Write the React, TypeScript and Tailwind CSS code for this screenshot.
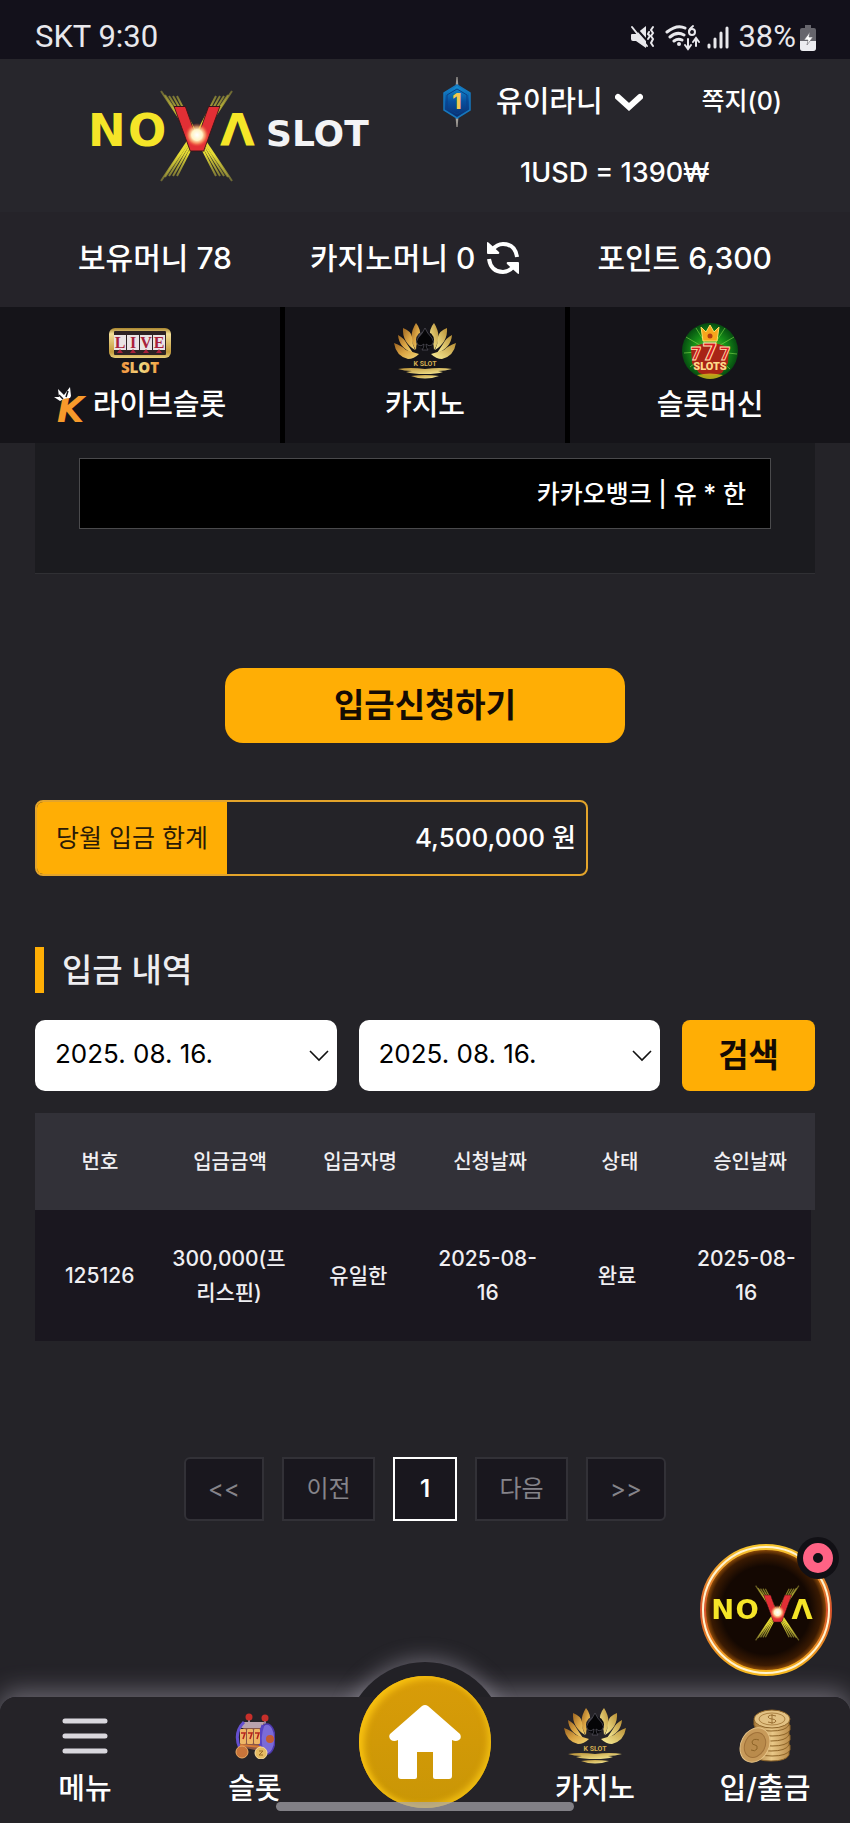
import type { ReactNode } from 'react';

const LOGO_FONT = "'DejaVu Sans', sans-serif";

const tabs = [
  { name: '라이브슬롯', link: '#live', icon: <LiveSlotIcon />, prefix: <KMark /> },
  { name: '카지노', link: '#casino', icon: <KSlotIcon id="tab" /> },
  { name: '슬롯머신', link: '#slot', icon: <SevensIcon /> },
];

const columns = ['번호', '입금금액', '입금자명', '신청날짜', '상태', '승인날짜'];

const deposits = [['125126', '300,000(프리스핀)', '유일한', '2025-08-16', '완료', '2025-08-16']];

const pages = [
  { name: '<<', style: 'w-20 rounded-l-md border-[#323137] text-[#85848a]' },
  { name: '이전', style: 'w-[93px] border-[#323137] text-[#85848a]' },
  { name: '1', style: 'w-16 border-white font-semibold text-white' },
  { name: '다음', style: 'w-[93px] border-[#323137] text-[#85848a]' },
  { name: '>>', style: 'w-20 rounded-r-md border-[#323137] text-[#85848a]' },
];

/* Letters and light burst shared by the header logo and the floating button */
function NovaLetters({ id }: { id: string }) {
  const rays = [0, 4, 8, 12, 16];
  return (
    <>
      <defs>
        <radialGradient id={`${id}-core`}>
          <stop offset="0" stopColor="#fff" />
          <stop offset="0.45" stopColor="#fff3c4" />
          <stop offset="0.7" stopColor="#ffb070" stopOpacity="0.7" />
          <stop offset="1" stopColor="#f04030" stopOpacity="0" />
        </radialGradient>
        <linearGradient id={`${id}-ray`} gradientUnits="userSpaceOnUse" x1="0" y1="0" x2="0" y2="92">
          <stop offset="0" stopColor="#a9a23c" stopOpacity="0.5" />
          <stop offset="0.35" stopColor="#e6dc34" />
          <stop offset="0.7" stopColor="#e6dc34" />
          <stop offset="1" stopColor="#a9a23c" stopOpacity="0.5" />
        </linearGradient>
      </defs>
      <g stroke={`url(#${id}-ray)`} strokeWidth="2">
        {rays.map((r) => (
          <g key={r}>
            <path d={`M${70 + r} ${1 + Math.min(r, 5)} L${103 + r / 3} 50`} />
            <path d={`M${141 - r} ${1 + Math.min(r, 5)} L${108 - r / 3} 50`} />
            <path d={`M${70 + r} ${91 - Math.min(r, 5)} L${103 + r / 3} 42`} />
            <path d={`M${141 - r} ${91 - Math.min(r, 5)} L${108 - r / 3} 42`} />
          </g>
        ))}
      </g>
      <g fontFamily={LOGO_FONT} fontWeight="700">
        <text x="-3" y="56" fontSize="45" fill="#f5e528">N</text>
        <text x="37" y="56" fontSize="45" fill="#f5e528">O</text>
        <text x="129" y="56" fontSize="45" fill="#f5e528">Λ</text>
        <text x="106" y="61" fontSize="60" fill="#e22f35" stroke="#3a1518" strokeWidth="0.8" textAnchor="middle">
          V
        </text>
      </g>
      <circle cx="106" cy="45" r="12" fill={`url(#${id}-core)`} />
    </>
  );
}

function Logo() {
  return (
    <svg className="h-[92px] w-[285px] overflow-visible" viewBox="0 0 285 92" role="img" aria-label="NOVA SLOT">
      <NovaLetters id="logo" />
      <text x="175" y="56" fontSize="36" fontWeight="700" fill="#f3f3f5" fontFamily={LOGO_FONT}>
        SLOT
      </text>
    </svg>
  );
}

function StatusIcons() {
  return (
    <svg className="h-7 w-[100px]" viewBox="0 0 100 28" fill="none" stroke="#e8e8ec" strokeLinecap="round">
      {/* muted, vibrating */}
      <path d="M1 11q0-1 1-1h4l10-8v22l-10-7H3q-2 0-2-2z" fill="#e8e8ec" stroke="none" />
      <path d="M4 2l16 18" stroke="#13111b" strokeWidth="2" />
      <path d="M2 3l15 19" strokeWidth="2" />
      <path d="M19 8l-1 2 2 2-2 3M23 3l-2 3 2 3-2 3 2 3-2 4 2 3" strokeWidth="2" />
      {/* wifi 6 */}
      <path d="M37 8q10-8 18-4M40 13q7-6 14-2M44 17q4-3 8-1" strokeWidth="3" />
      <circle cx="49" cy="20" r="2" fill="#e8e8ec" stroke="none" />
      <path d="M63 2q-4 3-4 6" strokeWidth="2" />
      <circle cx="62" cy="8" r="3" strokeWidth="2" />
      <path d="M58 15v9m-3-3l3 4 3-4M66 22v-7m-3 3l3-4 3 4" strokeWidth="2" />
      {/* signal */}
      <path d="M79 21v2M85 15v8M91 9v14M97 4v19" strokeWidth="3" />
    </svg>
  );
}

function BatteryIcon() {
  return (
    <svg className="h-[26px] w-4" viewBox="0 0 16 26">
      <path d="M5 0h6v3h3q2 0 2 2v18q0 3-3 3H3q-3 0-3-3V5q0-2 2-2h3z" fill="#66656c" />
      <path d="M0 16h16v7q0 3-3 3H3q-3 0-3-3z" fill="#ececf0" />
      <path d="M10 7L4 15h4l-1 5 6-8H9z" fill="#fff" stroke="#66656c" strokeWidth="0.6" />
    </svg>
  );
}

function LevelBadge() {
  return (
    <svg className="h-[50px] w-[30px]" viewBox="0 0 30 50" role="img" aria-label="레벨 1">
      <defs>
        <linearGradient id="level" x2="0" y2="1">
          <stop offset="0" stopColor="#1593d6" />
          <stop offset="0.5" stopColor="#07509f" />
          <stop offset="1" stopColor="#0a2c6c" />
        </linearGradient>
      </defs>
      <path d="M15 0l1 9h-2zM15 50l1-9h-2z" fill="#b9b3ac" stroke="#b9b3ac" strokeWidth="0.6" />
      <path d="M15 8l13 8v17l-13 8-13-8V16z" fill="url(#level)" stroke="#1677bd" strokeWidth="1.5" />
      <path d="M15 12l10 6v13l-10 6-10-6V18z" fill="none" stroke="#0a3f86" />
      <text x="15" y="32" fontSize="21" fontWeight="800" fill="#f3c74f" textAnchor="middle" fontFamily="Inter, sans-serif">
        1
      </text>
    </svg>
  );
}

function RefreshIcon() {
  return (
    <svg className="block size-8" viewBox="0 0 32 32" fill="none" stroke="#fff" strokeWidth="4">
      <path d="M5 8Q10 2 16 2q12 0 14 13" />
      <path d="M0 1q0-2 2 0l10 9q1 2-1 2H1q-1 0-1-1z" fill="#fff" stroke="none" />
      <path d="M27 24q-5 6-11 6Q4 30 2 17" />
      <path d="M32 31q0 2-2 0l-10-9q-1-2 1-2h10q1 0 1 1z" fill="#fff" stroke="none" />
    </svg>
  );
}

function LiveSlotIcon() {
  return (
    <svg className="h-[46px] w-16 overflow-visible" viewBox="0 0 64 46">
      <defs>
        <linearGradient id="live-frame" x2="0" y2="1">
          <stop offset="0" stopColor="#a8842c" />
          <stop offset="0.2" stopColor="#f3df98" />
          <stop offset="0.8" stopColor="#c39b3c" />
          <stop offset="1" stopColor="#e8cf7c" />
        </linearGradient>
        <linearGradient id="live-text">
          <stop offset="0" stopColor="#f28b35" />
          <stop offset="0.5" stopColor="#f0dc84" />
          <stop offset="1" stopColor="#f29a3c" />
        </linearGradient>
      </defs>
      <rect x="1" y="0" width="62" height="30" rx="6" fill="url(#live-frame)" />
      <rect x="6" y="3" width="52" height="24" rx="1" fill="#2d2224" />
      {['L', 'I', 'V', 'E'].map((letter, i) => (
        <g key={letter}>
          <rect x={6 + i * 13} y="7" width="12" height="15" fill="#e9e3e4" />
          <path d={`M${12 + i * 13} 21l3 4h-6z`} fill="#a8203a" />
          <text
            x={12 + i * 13}
            y="20"
            fontSize="16"
            fontWeight="700"
            fill="#a8203a"
            textAnchor="middle"
            fontFamily="'Liberation Serif', serif"
          >
            {letter}
          </text>
        </g>
      ))}
      <text x="32" y="45" fontSize="15" fontWeight="800" fill="url(#live-text)" textAnchor="middle" fontFamily="'Open Sans', sans-serif">
        SLOT
      </text>
    </svg>
  );
}

function KMark() {
  return (
    <svg className="h-9 w-[35px] overflow-visible" viewBox="0 0 35 36">
      <text x="3" y="35" fontSize="35" fontWeight="700" fontStyle="italic" fill="#f79a2b" fontFamily={LOGO_FONT}>
        K
      </text>
      <path d="M6 14L0 10l5 0-1-8 6 6 6-8 1 9-1 2q-6 0-10 3z" fill="#fff" />
      <path d="M5 8l4 4M14 4l-2 6" stroke="#151419" strokeWidth="1.5" />
    </svg>
  );
}

function KSlotIcon({ id }: { id: string }) {
  const petals = (
    <>
      <path d="M22 0q5 6 4 14-4 5-4 13-9-13 0-27z" />
      <path d="M9 5q8 3 9 9 0 7 3 13-13-8-12-22z" />
      <path d="M4 12q6 3 9 9l6 9Q5 25 4 12z" />
      <path d="M0 20q8 3 12 7l13 4q-5 5-11 5Q2 33 0 20z" />
    </>
  );
  return (
    <svg className="h-14 w-[62px]" viewBox="0 0 62 56">
      <defs>
        <linearGradient id={`${id}-left`} x2="1" y2="1">
          <stop offset="0" stopColor="#9c6420" />
          <stop offset="0.5" stopColor="#dba544" />
          <stop offset="1" stopColor="#f2d878" />
        </linearGradient>
        <linearGradient id={`${id}-right`} x2="1" y2="1">
          <stop offset="0" stopColor="#b98f34" />
          <stop offset="1" stopColor="#fbf19c" />
        </linearGradient>
        <radialGradient id={`${id}-spade`} cx="0.35" cy="0.3">
          <stop offset="0" stopColor="#777681" />
          <stop offset="0.5" stopColor="#26252b" />
          <stop offset="1" stopColor="#08080b" />
        </radialGradient>
      </defs>
      <g fill={`url(#${id}-left)`}>{petals}</g>
      <g fill={`url(#${id}-right)`} transform="matrix(-1 0 0 1 62 0)">{petals}</g>
      <circle cx="31" cy="17" r="9" fill={`url(#${id}-spade)`} />
      <path
        d="M31 5q2 5 7 10 3 4 0 7-3 2-6-1 0 4 2 6h-6q2-2 2-6-3 3-6 1-3-3 0-7 5-5 7-10z"
        fill="#050507"
        stroke="#56555e"
        strokeWidth="0.7"
      />
      <text x="31" y="43" fontSize="7" fontWeight="700" fill="#d3ad52" textAnchor="middle" fontFamily="Roboto, sans-serif">
        K SLOT
      </text>
      <path d="M4 46q12-2 27 0 15-2 27 0-7 2-14 2l5 1q-6 2-18 2t-19-2l6-1q-8 0-14-2z" fill={`url(#${id}-right)`} />
      <path d="M17 53q14-2 28 0-14 5-28 0z" fill={`url(#${id}-right)`} />
    </svg>
  );
}

function SevensIcon() {
  return (
    <svg className="h-[57px] w-[57px]" viewBox="0 0 57 57">
      <defs>
        <radialGradient id="sevens">
          <stop offset="0" stopColor="#7fd030" />
          <stop offset="0.6" stopColor="#159018" />
          <stop offset="1" stopColor="#064c10" />
        </radialGradient>
      </defs>
      <circle cx="28" cy="28" r="28" fill="url(#sevens)" />
      <path
        d="M28 28L4 14M28 28L2 30M28 28L8 44M28 28l24-14M28 28l27 3M28 28l20 18M28 28L14 5M28 28L43 5"
        stroke="#86dd4c"
        opacity="0.6"
      />
      <path d="M19 4l5 5 4-7 4 7 5-5-2 14H21z" fill="#f7a61c" stroke="#ffdb62" />
      <circle cx="28" cy="13" r="2.5" fill="#b43b10" />
      <path d="M9 25q10-5 19-5t19 5l-1 15-6 10q-12 5-23 0l-7-10z" fill="#a82416" />
      <g fontWeight="900" textAnchor="middle" fontFamily="Roboto, sans-serif">
        <g fill="#d81920" stroke="#ffe2b0">
          <text x="14" y="37" fontSize="18" strokeWidth="0.8">7</text>
          <text x="43" y="37" fontSize="18" strokeWidth="0.8">7</text>
          <text x="28" y="37" fontSize="24" strokeWidth="1">7</text>
        </g>
        <text x="28" y="47" fontSize="11" fill="#ffd98a">SLOTS</text>
      </g>
      <path d="M15 52q13-3 26 0-13 8-26 0z" fill="#d7b71c" opacity="0.8" />
    </svg>
  );
}

function MenuIcon() {
  return (
    <svg className="h-9 w-[46px]" viewBox="0 0 46 36" stroke="#d9d7dd" strokeWidth="5" strokeLinecap="round">
      <path d="M3 3h40M3 18h40M3 33h40" />
    </svg>
  );
}

function SlotMachineIcon() {
  return (
    <svg className="h-[46px] w-10" viewBox="0 0 40 46">
      <path d="M14 4v10M30 5v10" stroke="#b8a5c4" strokeWidth="1.5" />
      <circle cx="14" cy="4" r="3.5" fill="#c72f2a" />
      <circle cx="30" cy="5" r="3.5" fill="#c72f2a" />
      <path d="M9 9h20v30L6 34z" fill="#8b5747" />
      <path d="M8 9h21l-2 6H6z" fill="#b9a2ad" />
      <ellipse cx="32" cy="26" rx="8" ry="15" fill="#7b6bd8" stroke="#4c37ab" strokeWidth="1.5" />
      <path d="M9 9Q-2 20 5 36" fill="none" stroke="#6550d0" strokeWidth="3" />
      <path d="M28 12q-5 12-1 27" fill="none" stroke="#5643c4" strokeWidth="3" />
      {[5, 12, 19].map((x) => (
        <g key={x}>
          <rect x={x} y="16" width="6" height="15" rx="1" fill="#eeb565" />
          <path d={`M${x + 1} 20h4l-2 6`} fill="none" stroke="#b8261e" strokeWidth="1.6" />
        </g>
      ))}
      <path d="M5 32l21 2" stroke="#d87b37" strokeWidth="2" />
      <circle cx="35" cy="26" r="4" fill="#c35a33" />
      <circle cx="7" cy="39" r="6" fill="#c8743a" stroke="#edaa62" />
      <circle cx="26" cy="40" r="6" fill="#e5bb62" stroke="#f8dda0" />
      <path d="M24 38h4l-4 4h4" fill="none" stroke="#9b6a25" />
    </svg>
  );
}

function CoinsIcon() {
  return (
    <svg className="h-[54px] w-[52px]" viewBox="0 0 52 54" stroke="#8d6428">
      <defs>
        <linearGradient id="coin">
          <stop offset="0" stopColor="#a97a3a" />
          <stop offset="0.5" stopColor="#e9c888" />
          <stop offset="1" stopColor="#b98a48" />
        </linearGradient>
      </defs>
      {[44, 39, 34, 29, 24, 19, 14].map((y, i) => (
        <path key={y} d={`M${15 + (i % 2)} ${y - 3}v5q2 6 17 6t18-6v-5z`} fill="url(#coin)" />
      ))}
      <ellipse cx="33" cy="10" rx="18" ry="9" fill="#e2c183" />
      <ellipse cx="33" cy="10" rx="13" ry="6" fill="none" stroke="#ad8344" />
      <path d="M37 7q-7-2-8 1 1 2 4 2t4 2q-1 3-8 1M33 5v10" fill="none" stroke="#9a7034" />
      <ellipse cx="16" cy="36" rx="14" ry="18" transform="rotate(28 16 36)" fill="#c79a5a" stroke="#e6c488" />
      <ellipse cx="16" cy="36" rx="10" ry="13" transform="rotate(28 16 36)" fill="#b98b4c" stroke="#a0723a" />
      <path d="M20 31q-6-2-7 2 0 3 3 3t2 4q-2 3-6 1" fill="none" stroke="#8d6428" />
    </svg>
  );
}

function NavItem({ name, link, children }: { name: string; link: string; children: ReactNode }) {
  return (
    <a href={link} className="flex flex-col items-center pt-3 text-[29px] leading-9 font-medium">
      <span className="flex h-[54px] items-center">{children}</span>
      <span className="mt-2">{name}</span>
    </a>
  );
}

function DateSelect({ label }: { label: string }) {
  return (
    <label className="relative flex-1">
      <span className="sr-only">{label}</span>
      <select className="h-[71px] w-full appearance-none rounded-[10px] bg-white px-5 pb-1 text-[26px] text-black">
        <option>2025. 08. 16.</option>
      </select>
      <svg
        className="pointer-events-none absolute top-[30px] right-2 h-3 w-5"
        viewBox="0 0 20 12"
        fill="none"
        stroke="#111"
        strokeWidth="1.6"
      >
        <path d="M1 1l9 9 9-9" />
      </svg>
    </label>
  );
}

const App = () => {
  return (
    <div className="flex min-h-screen flex-col bg-[#242328] font-[Inter,'Noto_Sans_CJK_KR',sans-serif] text-white">
      <div className="flex h-[59px] items-center justify-between bg-[#13111b] pt-4 pr-[34px] pl-[35px] font-[Roboto,sans-serif] text-[31px] text-[#e8e8ec]">
        <span>SKT 9:30</span>
        <div className="flex items-center">
          <StatusIcons />
          <span className="mr-1 ml-2">38%</span>
          <BatteryIcon />
        </div>
      </div>

      <header className="font-medium">
        <div className="flex h-[153px] items-center bg-[#27262c] pl-[91px]">
          <a href="#home">
            <Logo />
          </a>
          <div className="flex flex-1 flex-col gap-7 pb-1 pl-[66px]">
            <div className="flex items-center">
              <LevelBadge />
              <button type="button" className="ml-6 flex items-center gap-3 text-[29px]">
                유이라니
                <svg className="h-[18px] w-7" viewBox="0 0 28 18" fill="none" stroke="#fff" strokeWidth="6" strokeLinecap="round">
                  <path d="M3 4l11 10L25 4" />
                </svg>
              </button>
              <a href="#message" className="ml-auto pr-[68px] text-[25px]">
                쪽지(0)
              </a>
            </div>
            <p className="pl-[78px] text-[27px] leading-9">1USD = 1390₩</p>
          </div>
        </div>

        <div className="flex h-[95px] items-center justify-between bg-[#252329] px-[78px] pb-1 text-3xl">
          <span>보유머니 78</span>
          <span className="flex items-center gap-3">
            카지노머니 0
            <button type="button" aria-label="새로고침">
              <RefreshIcon />
            </button>
          </span>
          <span>포인트 6,300</span>
        </div>

        <nav className="grid grid-cols-3 gap-[5px] bg-black">
          {tabs.map((tab) => (
            <a
              key={tab.link}
              href={tab.link}
              className="flex h-[136px] flex-col items-center bg-[#151419] pt-[15px] text-[29px] leading-[42px]"
            >
              <span className="flex h-[58px] items-center">{tab.icon}</span>
              <span className="mt-1 flex items-center gap-1">
                {tab.prefix}
                {tab.name}
              </span>
            </a>
          ))}
        </nav>
      </header>

      <main className="flex-1 px-[35px] pb-[176px]">
        <section className="border-b border-[#303034] bg-[#1b1b1f] px-11 pt-[15px] pb-11">
          <input
            readOnly
            aria-label="입금 계좌"
            value="카카오뱅크 | 유 * 한"
            className="block h-[71px] w-full border border-[#4a4a4c] bg-black px-6 pb-1 text-right text-[25px] font-medium"
          />
        </section>

        <button
          type="button"
          className="mx-auto mt-[94px] block h-[75px] w-[400px] rounded-[18px] bg-[#ffae05] text-[33px] font-bold text-[#140b04]"
        >
          입금신청하기
        </button>

        <dl className="mt-[57px] flex h-[76px] w-[553px] items-stretch overflow-hidden rounded-lg border-2 border-[#e3a42b] text-[25px] leading-[72px]">
          <dt className="w-[190px] bg-[#ffae05] text-center text-[#2a1a06]">당월 입금 합계</dt>
          <dd className="flex-1 pr-[10px] text-right text-[26px] font-medium">4,500,000 원</dd>
        </dl>

        <h2 className="mt-[71px] border-l-[9px] border-[#ffae05] pl-[18px] text-[33px] leading-[46px] font-medium text-[#ededf0]">
          입금 내역
        </h2>

        <form className="mt-[27px] flex gap-[22px]">
          <DateSelect label="시작일" />
          <DateSelect label="종료일" />
          <button type="button" className="h-[71px] w-[133px] rounded-lg bg-[#ffae05] text-[33px] font-bold text-[#140b04]">
            검색
          </button>
        </form>

        <table className="mt-[22px] block text-xl font-medium text-[#f0eff2]">
          <thead className="block bg-[#323138]">
            <tr className="grid h-[97px] grid-cols-6 items-center">
              {columns.map((column) => (
                <th key={column} className="font-medium">
                  {column}
                </th>
              ))}
            </tr>
          </thead>
          <tbody className="mr-1 block bg-[#1a171f]">
            {deposits.map((row) => (
              <tr key={row[0]} className="grid h-[131px] grid-cols-6 items-center text-center text-[21px] leading-[34px]">
                {row.map((cell, i) => (
                  <td key={i} className="px-1.5">
                    {cell}
                  </td>
                ))}
              </tr>
            ))}
          </tbody>
        </table>

        <nav className="mt-[116px] flex justify-center gap-[18px]" aria-label="페이지">
          {pages.map((page) => (
            <button key={page.name} type="button" className={`h-16 border-2 bg-[#19171e] text-2xl ${page.style}`}>
              {page.name}
            </button>
          ))}
        </nav>
      </main>

      <button type="button" aria-label="NOVA" className="fixed right-[18px] bottom-[147px] z-20 size-[132px]">
        <svg viewBox="0 0 132 132" className="size-full overflow-visible">
          <defs>
            <radialGradient id="ring-inner">
              <stop offset="0.7" stopColor="#140802" />
              <stop offset="0.88" stopColor="#3a1a02" />
              <stop offset="1" stopColor="#b8650c" />
            </radialGradient>
            <linearGradient id="ring" x2="0" y2="1">
              <stop offset="0" stopColor="#f7c52d" />
              <stop offset="0.5" stopColor="#d8522c" />
              <stop offset="1" stopColor="#f7b81f" />
            </linearGradient>
          </defs>
          <circle cx="66" cy="66" r="63" fill="url(#ring-inner)" stroke="url(#ring)" strokeWidth="6" />
          <circle cx="66" cy="66" r="63" fill="none" stroke="#fff3cf" strokeWidth="2" />
          <svg x="13" y="41" width="106" height="56" viewBox="0 0 174 92" className="overflow-visible">
            <NovaLetters id="float" />
          </svg>
          <circle cx="118" cy="14" r="21" fill="#111015" />
          <circle cx="118" cy="14" r="10" fill="none" stroke="#ff6385" strokeWidth="10" />
        </svg>
      </button>

      <nav className="sticky bottom-0 z-10">
        <div className="absolute inset-0 rounded-t-2xl shadow-[0_-6px_24px_rgba(190,185,200,0.45)]" />
        <div className="absolute inset-x-0 -top-[35px] mx-auto size-40 rounded-full bg-[#222126] shadow-[0_-4px_20px_rgba(190,185,200,0.4)] [clip-path:inset(-40px_-40px_125px_-40px)]" />
        <div className="relative grid h-[126px] grid-cols-5 rounded-t-2xl bg-[#252328]">
          <NavItem name="메뉴" link="#menu">
            <MenuIcon />
          </NavItem>
          <NavItem name="슬롯" link="#slot">
            <SlotMachineIcon />
          </NavItem>
          <a href="#home" aria-label="홈" className="-mt-[21px] flex justify-center">
            <span className="flex size-[132px] items-center justify-center rounded-full bg-linear-to-b from-[#d99c08] to-[#c99606] shadow-[inset_5px_3px_6px_#f7c010,inset_-3px_-3px_6px_#f0bd12]">
              <svg className="h-[74px] w-[72px]" viewBox="0 0 72 74" fill="#fff">
                <path d="M33 1q3-2 6 0l32 28q2 4-1 6-3 2-7 0v36q0 3-3 3H46q-2 0-2-2V47H28v25q0 2-2 2H12q-3 0-3-3V35q-4 2-7 0-3-3-1-6z" />
              </svg>
            </span>
          </a>
          <NavItem name="카지노" link="#casino">
            <KSlotIcon id="nav" />
          </NavItem>
          <NavItem name="입/출금" link="#cash">
            <CoinsIcon />
          </NavItem>
        </div>
        <div className="absolute inset-x-0 bottom-3 mx-auto h-[9px] w-[298px] rounded-full bg-[#a9a8ae]/70" />
      </nav>
    </div>
  );
};

export default App;
